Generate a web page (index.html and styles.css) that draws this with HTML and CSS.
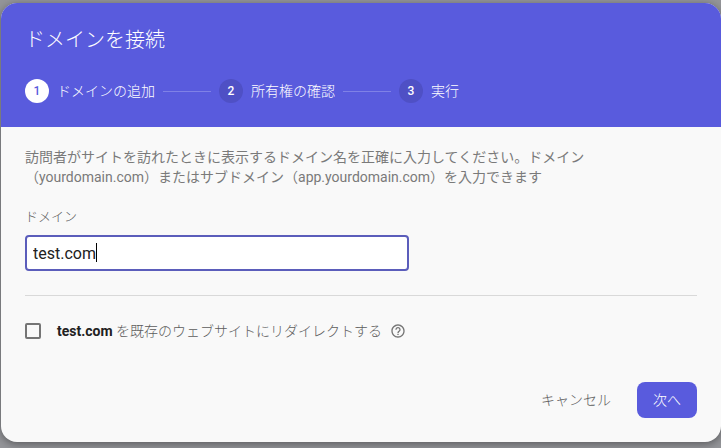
FILE: index.html
```html
<!DOCTYPE html>
<html lang="ja">
<head>
<meta charset="utf-8">
<meta name="viewport" content="width=device-width, initial-scale=1">
<title>ドメインを接続</title>
<link rel="stylesheet" href="styles.css">
</head>
<body>
<main class="dialog" role="dialog" aria-labelledby="title">
  <header class="header">
    <h1 class="title" id="title">ドメインを接続</h1>
    <ol class="steps">
      <li class="step"><span class="num active">1</span><span>ドメインの追加</span></li>
      <li class="step"><span class="num">2</span><span>所有権の確認</span></li>
      <li class="step"><span class="num">3</span><span>実行</span></li>
    </ol>
  </header>
  <form class="body">
    <p class="description">訪問者がサイトを訪れたときに表示するドメイン名を正確に入力してください。ドメイン<br>（yourdomain.com）またはサブドメイン（app.yourdomain.com）を入力できます</p>
    <label class="label" for="domain">ドメイン</label>
    <div class="field">
      <input class="input" id="domain" type="text" value="test.com">
      <span class="caret"></span>
    </div>
    <hr class="divider">
    <div class="redirect">
      <input class="check" id="redirect" type="checkbox">
      <label for="redirect"><strong>test.com</strong> を既存のウェブサイトにリダイレクトする</label>
      <svg class="help" viewBox="0 0 24 24" aria-hidden="true"><path d="M11 18h2v-2h-2v2zm1-16C6.480 2 2 6.480 2 12s4.480 10 10 10 10-4.480 10-10S17.520 2 12 2zm0 18c-4.410 0-8-3.590-8-8s3.590-8 8-8 8 3.590 8 8-3.590 8-8 8zm0-14c-2.210 0-4 1.790-4 4h2c0-1.100.9-2 2-2s2 .9 2 2c0 2-3 1.750-3 5h2c0-2.250 3-2.500 3-5 0-2.210-1.790-4-4-4z"/></svg>
    </div>
    <footer class="actions">
      <button class="button" type="button">キャンセル</button>
      <button class="button primary" type="button">次へ</button>
    </footer>
  </form>
</main>
</body>
</html>
```
FILE: styles.css
```css
* {
  box-sizing: border-box;
}

body {
  margin: 0;
  padding: 3px 0 6px 1px;
  background: #949599;
  color: #5c5c5c;
  font: 300 14px/20px Roboto, "Noto Sans CJK JP", sans-serif;
}

.dialog {
  overflow: hidden;
  border-radius: 16px;
  background: #f9f9f9;
  box-shadow: 0 2px 8px rgba(0, 0, 0, 0.4);
}

.header {
  padding: 24px;
  background: #595bdd;
  color: #fff;
}

.title {
  margin: 0 0 26px;
  font-size: 20px;
  font-weight: 300;
  line-height: 26px;
}

.steps {
  display: flex;
  margin: 0;
  padding: 0;
  list-style: none;
}

.step {
  display: flex;
  align-items: center;
  gap: 8px;
}

.step:not(:last-child)::after {
  width: 48px;
  height: 1px;
  margin-right: 8px;
  background: #7f81e6;
  content: "";
}

.num {
  width: 24px;
  height: 24px;
  border-radius: 50%;
  background: #4f50c5;
  color: #fff;
  font-size: 12px;
  font-weight: 500;
  line-height: 24px;
  text-align: center;
}

.num.active {
  background: #fff;
  color: #595bdd;
}

.body {
  padding: 20px 24px 24px;
}

.description {
  margin: 0 0 20px;
  color: #7a7a7a;
  font-weight: 400;
}

.label {
  display: block;
  margin-bottom: 8px;
  font-size: 13px;
}

.field {
  position: relative;
  max-width: 384px;
}

.input {
  display: block;
  width: 100%;
  height: 36px;
  padding: 0 6px;
  border: 2px solid #5b5dbb;
  border-radius: 4px;
  outline: 0;
  background: #fff;
  color: #212121;
  font: 400 16px/20px Roboto, sans-serif;
}

.caret {
  position: absolute;
  top: 8px;
  left: 71px;
  width: 1px;
  height: 19px;
  background: #000;
}

.divider {
  height: 1px;
  margin: 24px 0;
  border: 0;
  background: #d9d9d9;
}

.redirect {
  display: flex;
  align-items: center;
  min-height: 22px;
}

.redirect strong {
  color: #212121;
  font-weight: 700;
}

.check {
  width: 16px;
  height: 16px;
  margin: 0 16px 0 0;
  border: 2px solid #757575;
  border-radius: 2px;
  appearance: none;
}

.help {
  width: 16px;
  height: 16px;
  margin-left: 8px;
  fill: #757575;
}

.actions {
  display: flex;
  justify-content: flex-end;
  gap: 10px;
  margin-top: 40px;
}

.button {
  height: 36px;
  padding: 0 16px;
  border: 0;
  border-radius: 8px;
  background: transparent;
  color: inherit;
  font: inherit;
}

.primary {
  background: #595bdd;
  color: #fff;
}
```
